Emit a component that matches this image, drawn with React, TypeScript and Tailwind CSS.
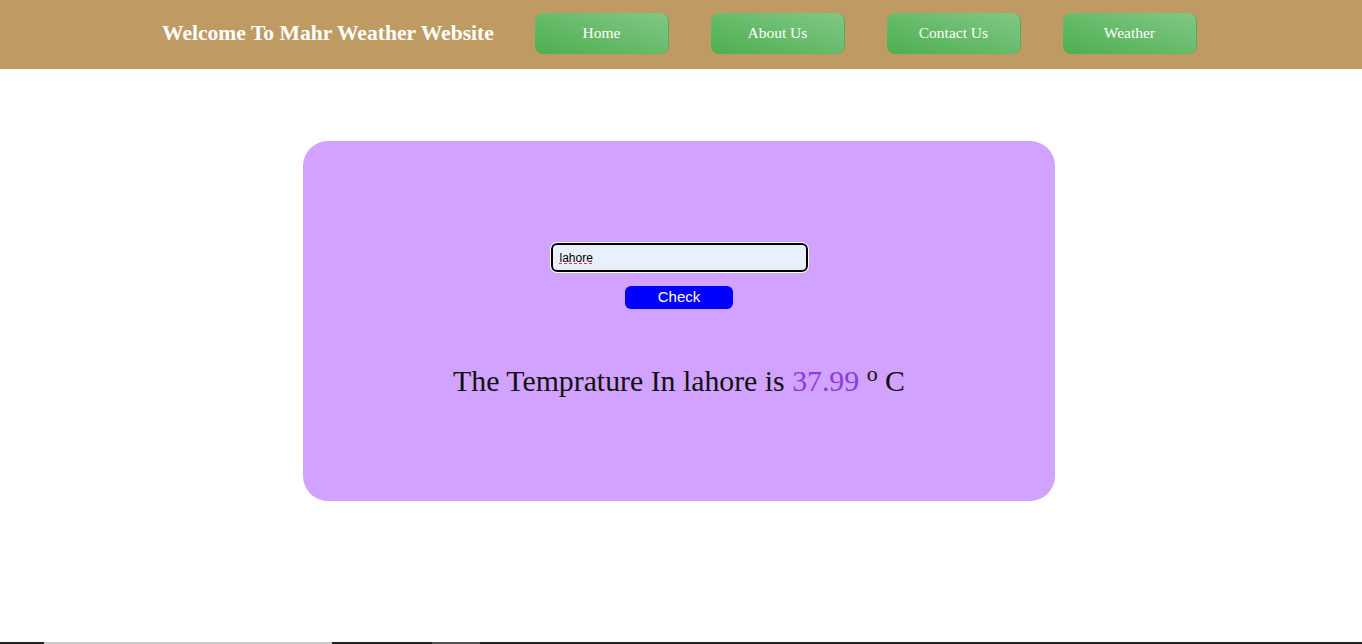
import React from "react";

const serif = { fontFamily: '"Liberation Serif", "Times New Roman", serif' };

function NavBtn({ label }: { label: string }) {
  return (
    <button
      className="w-[134px] h-[41px] rounded-[8px] text-white text-[15.5px] bg-gradient-to-tr from-[#4caf50] to-[#81c784] border-r border-[#5aa85c] flex items-center justify-center"
      style={serif}
    >
      {label}
    </button>
  );
}

export default function App() {
  return (
    <div className="w-[1362px] h-[644px] bg-white flex flex-col overflow-hidden">
      <header className="h-[69px] bg-[#bf9b63] flex items-center pl-[162px] pb-[3px]">
        <h1 className="text-white font-bold text-[21.6px] mr-[41px]" style={serif}>
          Welcome To Mahr Weather Website
        </h1>
        <nav className="flex gap-[42px] items-center">
          <NavBtn label="Home" />
          <NavBtn label="About Us" />
          <NavBtn label="Contact Us" />
          <NavBtn label="Weather" />
        </nav>
      </header>

      <main className="flex-1 flex flex-col">
        <section className="mt-[72px] ml-[303px] w-[752px] h-[360px] rounded-[25px] bg-[#d1a2ff] flex flex-col items-center pt-[102px]">
          <div className="w-[257px] h-[29px] rounded-[6px] border-[2px] border-black outline outline-1 outline-white bg-[#e8f0fe] flex items-center px-[7px]">
            <span
              className="text-[12px] text-black underline decoration-dashed decoration-red-500"
              style={{ fontFamily: '"Liberation Sans", Arial, sans-serif' }}
            >
              lahore
            </span>
          </div>
          <button
            className="mt-[14px] w-[108px] h-[23px] rounded-[6px] bg-[#0000ff] text-white text-[15px] flex items-center justify-center"
            style={{ fontFamily: '"Liberation Sans", Arial, sans-serif' }}
          >
            Check
          </button>
          <p className="mt-[50px] text-[29.8px] text-[#111]" style={serif}>
            The Temprature In lahore is <span className="text-[#8a3ce0]">37.99</span>{" "}
            <span className="text-[22px] relative top-[-10px]">o</span> C
          </p>
        </section>
      </main>

      <div className="h-[2px] flex shrink-0">
        <div className="w-[44px] bg-[#222]" />
        <div className="w-[288px] bg-[#c8c8c8]" />
        <div className="w-[100px] bg-[#222]" />
        <div className="w-[48px] bg-[#555]" />
        <div className="flex-1 bg-[#222]" />
      </div>
    </div>
  );
}
